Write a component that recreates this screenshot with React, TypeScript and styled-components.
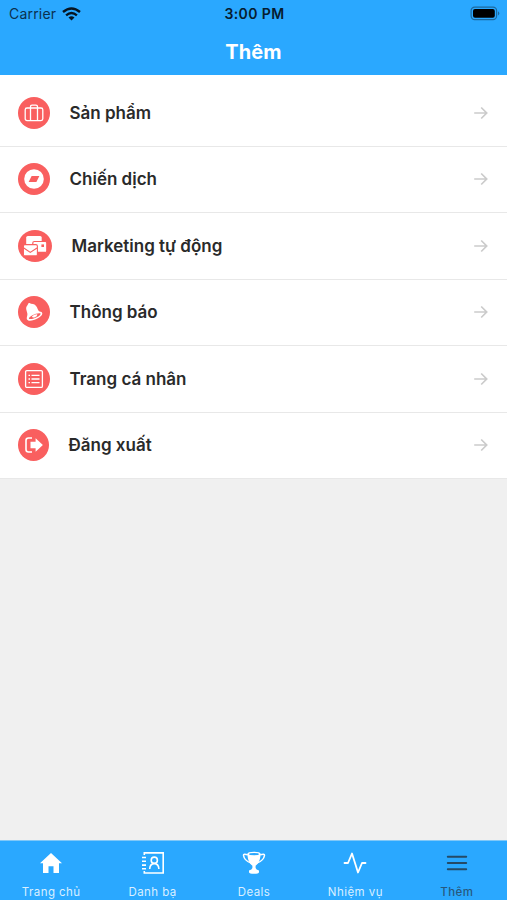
import React from "react";
import styled, { createGlobalStyle } from "styled-components";

const GlobalStyle = createGlobalStyle`
  * { box-sizing: border-box; }
  body { margin: 0; font-family: Inter, "Liberation Sans", sans-serif; background: #f0f0f0; }
`;

const Screen = styled.div`
  width: 507px;
  height: 900px;
  display: flex;
  flex-direction: column;
  background: #f0f0f0;
  overflow: hidden;
`;

const Header = styled.header`
  height: 75px;
  flex: none;
  background: #2aa8ff;
`;

const StatusBar = styled.div`
  height: 27px;
  padding: 0 7px 0 9px;
  display: grid;
  grid-template-columns: 1fr auto 1fr;
  align-items: center;
  color: #0b3150;
`;

const Carrier = styled.div`
  display: flex;
  align-items: center;
  gap: 6px;
  font-size: 14px;
  letter-spacing: 0.2px;
`;

const Clock = styled.div`
  font-size: 14px;
  font-weight: 600;
  letter-spacing: 0.4px;
  color: #061c30;
`;

const BatterySlot = styled.div`
  display: flex;
  justify-content: flex-end;
`;

const Title = styled.h1`
  margin: 0;
  height: 48px;
  line-height: 51px;
  text-align: center;
  font-size: 20px;
  font-weight: 700;
  letter-spacing: 0.1px;
  color: #fff;
`;

const Menu = styled.main`
  height: 404px;
  flex: none;
  padding-top: 5px;
  background: #fff;
  display: grid;
  grid-template-rows: repeat(6, 1fr);
`;

const Row = styled.div`
  display: flex;
  align-items: center;
  padding: 0 18px;
  border-bottom: 1.5px solid #e8e8e8;
`;

const Badge = styled.span<{ $w: number }>`
  width: ${(p) => p.$w}px;
  height: 32px;
  border-radius: 50%;
  background: #f95f5f;
  display: flex;
  align-items: center;
  justify-content: center;
  flex: none;
`;

const Label = styled.span`
  flex: 1;
  margin-left: 19.5px;
  font-size: 17px;
  font-weight: 600;
  color: #2a2a2a;
`;

const Tabs = styled.nav`
  height: 60px;
  margin-top: auto;
  flex: none;
  display: grid;
  grid-template-columns: repeat(5, 1fr);
  background: #2aa8ff;
  border-top: 1px solid #80c8f8;
`;

const Tab = styled.div`
  display: flex;
  flex-direction: column;
  align-items: center;
  padding: 10px 0 0 1px;
  gap: 10px;
  font-size: 11.5px;
  line-height: 15px;
  letter-spacing: 0.45px;
  white-space: nowrap;
`;

const TabText = styled.span<{ $active?: boolean }>`
  font-weight: ${(p) => (p.$active ? 500 : 400)};
  color: ${(p) => (p.$active ? "#27587d" : "#d9efff")};
`;

const Wifi = () => (
  <svg width="19" height="14" viewBox="0 0 19 14" fill="none" stroke="#061522" strokeWidth="2.4">
    <path d="M1 5Q9.5-2.2 18 5M4.1 8.3Q9.5 3.7 14.9 8.3" />
    <path d="M6.5 10.6Q9.5 8.1 12.5 10.6L9.5 13.6Z" fill="#061522" stroke="none" />
  </svg>
);

const Battery = () => (
  <svg width="30" height="15" viewBox="0 0 30 15">
    <rect x="1.1" y="1.1" width="25.5" height="12.6" rx="3.6" fill="none" stroke="#1d699e" strokeWidth="1.2" />
    <rect x="3" y="3" width="21.8" height="8.8" rx="2" fill="#000" />
    <path d="M28 5.2Q30.6 7.4 28 9.6Z" fill="#1d699e" />
  </svg>
);

const Suitcase = () => (
  <svg width="20" height="20" viewBox="0 0 20 20" fill="none" stroke="#fff" strokeWidth="1.3">
    <rect x="1.2" y="5" width="17.6" height="12.6" rx="1.8" />
    <path d="M6.5 17.6V3.7Q6.5 2.1 8.1 2.1H11.9Q13.5 2.1 13.5 3.7V17.6" strokeWidth="1.3" />
  </svg>
);

const Compass = () => (
  <svg width="20" height="20" viewBox="0 0 20 20">
    <circle cx="10" cy="10" r="9.8" fill="#fff" />
    <path d="M7.6 7.1H15.4L12.4 13H4.6Z" fill="#f95f5f" />
  </svg>
);

const Mail = () => (
  <svg width="24" height="22" viewBox="0 0 24 22">
    <rect x="3.2" y="1" width="15.5" height="12" rx="1.6" fill="#fff" />
    <rect x="9.8" y="6.5" width="14" height="10.9" rx="1.5" fill="#fff" stroke="#f95f5f" strokeWidth="1.2" />
    <rect x="18.4" y="9.4" width="2.6" height="2.6" fill="#f95f5f" />
    <rect x=".4" y="9.6" width="14" height="11.3" rx="1.5" fill="#fff" stroke="#f95f5f" strokeWidth="1.1" />
    <path d="M.8 13L7.3 17.4 14 13" fill="none" stroke="#f95f5f" strokeWidth="1.2" />
  </svg>
);

const Bell = () => (
  <svg width="20" height="22" viewBox="0 0 20 22">
    <path d="M4.3 2.5C5.3 1.6 6.4 2.2 6.8 2.8C13 2.7 13 7.6 14.6 9.8C15.8 11.1 18.4 10.4 18.3 12.8C18.1 16.2 8.2 20.8 4.2 19.4C1.5 18.4 3.5 15.7 3.4 13.1C3.1 9.9 .7 7.3 3.6 4.1Z" fill="#fff" />
    <path d="M4.9 17.7C4.4 15.6 13 11.3 16.6 12.4C17.3 14.7 8.2 19 4.9 17.7Z" fill="#f95f5f" />
    <path d="M8 15.2Q11 13 13.4 13.4Q13.4 15.5 10.5 16.4Q8 17 8 15.2Z" fill="#fff" />
  </svg>
);

const ListBox = () => (
  <svg width="20" height="20" viewBox="0 0 20 20" fill="none" stroke="#fff" strokeWidth="1.3">
    <rect x="1.6" y="1.6" width="16.8" height="16.8" rx="1.2" />
    <path d="M7.5 6.3H15.5M7.5 10H15.5M7.5 13.7H15.5M4.5 6.3H6M4.5 10H6M4.5 13.7H6" strokeWidth="1.3" />
  </svg>
);

const Logout = () => (
  <svg width="20" height="18" viewBox="0 0 20 18">
    <path d="M8 2H4.5Q2 2 2 4.5V13.5Q2 16 4.5 16H8" fill="none" stroke="#fff" strokeWidth="1.6" />
    <path d="M6.5 5.8H11.6V2.2L18.9 9L11.6 15.8V12.2H6.5Z" fill="#fff" />
  </svg>
);

const Arrow = () => (
  <svg width="16" height="16" viewBox="0 0 16 16" fill="none" stroke="#cbcbcb" strokeWidth="1.7">
    <path d="M1.2 8H13.8M8.2 2.5L13.7 8L8.2 13.5" />
  </svg>
);

const Home = () => (
  <svg width="24" height="24" viewBox="0 0 24 24">
    <path d="M12 2L23 12.3H20V22H14.5V15.3H9.5V22H4V12.3H1Z" fill="#fff" />
  </svg>
);

const Contacts = () => (
  <svg width="24" height="24" viewBox="0 0 24 24" fill="none" stroke="#fff" strokeWidth="1.6">
    <path d="M3.3 4V1.9H22.2V22H3.3V20M1 6.5H5M1 10.3H5M1 14.1H5M1 17.8H5" />
    <circle cx="13.3" cy="9.2" r="3.1" />
    <path d="M8.7 18Q9 12.6 13.3 12.6T17.9 18" />
  </svg>
);

const Trophy = () => (
  <svg width="24" height="24" viewBox="0 0 24 24" fill="none" stroke="#fff" strokeWidth="1.5">
    <path d="M5.8 3.8Q1.4 2.5 1.5 4.2C1.8 7.4 4.4 10.4 10 12.6M18.2 3.8Q22.6 2.5 22.5 4.2C22.2 7.4 19.6 10.4 14 12.6" />
    <path d="M5.3 2.9Q5.6.7 12 .7T18.7 2.9C18.1 8.9 16.8 12 13.6 14.8V17Q14 18.7 17 19.6V21.2Q16.6 22.8 12 22.8T7 21.2V19.6Q10 18.7 10.4 17V14.8C7.2 12 5.9 8.9 5.3 2.9Z" fill="#fff" stroke="none" />
    <ellipse cx="12" cy="3.1" rx="5.1" ry="1.2" fill="#2aa8ff" stroke="none" />
  </svg>
);

const Pulse = () => (
  <svg width="24" height="24" viewBox="0 0 24 24" fill="none" stroke="#fff" strokeWidth="1.8" strokeLinecap="round" strokeLinejoin="round">
    <path d="M1.5 12H5L9 2.5L15 21.5L19 12H22.5" />
  </svg>
);

const Burger = () => (
  <svg width="24" height="24" viewBox="0 0 24 24" stroke="#254a66" strokeWidth="2" strokeLinecap="round">
    <path d="M2.8 5.8H21.2M2.8 12H21.2M2.8 18.2H21.2" />
  </svg>
);

const items = [
  { label: "Sản phẩm", Icon: Suitcase, width: 32 },
  { label: "Chiến dịch", Icon: Compass, width: 32 },
  { label: "Marketing tự động", Icon: Mail, width: 34 },
  { label: "Thông báo", Icon: Bell, width: 32 },
  { label: "Trang cá nhân", Icon: ListBox, width: 32 },
  { label: "Đăng xuất", Icon: Logout, width: 31 },
];

const tabs = [
  { label: "Trang chủ", Icon: Home },
  { label: "Danh bạ", Icon: Contacts },
  { label: "Deals", Icon: Trophy },
  { label: "Nhiệm vụ", Icon: Pulse },
  { label: "Thêm", Icon: Burger, active: true },
];

export default function App() {
  return (
    <Screen>
      <GlobalStyle />
      <Header>
        <StatusBar>
          <Carrier>Carrier <Wifi /></Carrier>
          <Clock>3:00 PM</Clock>
          <BatterySlot><Battery /></BatterySlot>
        </StatusBar>
        <Title>Thêm</Title>
      </Header>
      <Menu>
        {items.map(({ label, Icon, width }) => (
          <Row key={label}>
            <Badge $w={width}><Icon /></Badge>
            <Label>{label}</Label>
            <Arrow />
          </Row>
        ))}
      </Menu>
      <Tabs>
        {tabs.map(({ label, Icon, active }) => (
          <Tab key={label}>
            <Icon />
            <TabText $active={active}>{label}</TabText>
          </Tab>
        ))}
      </Tabs>
    </Screen>
  );
}
